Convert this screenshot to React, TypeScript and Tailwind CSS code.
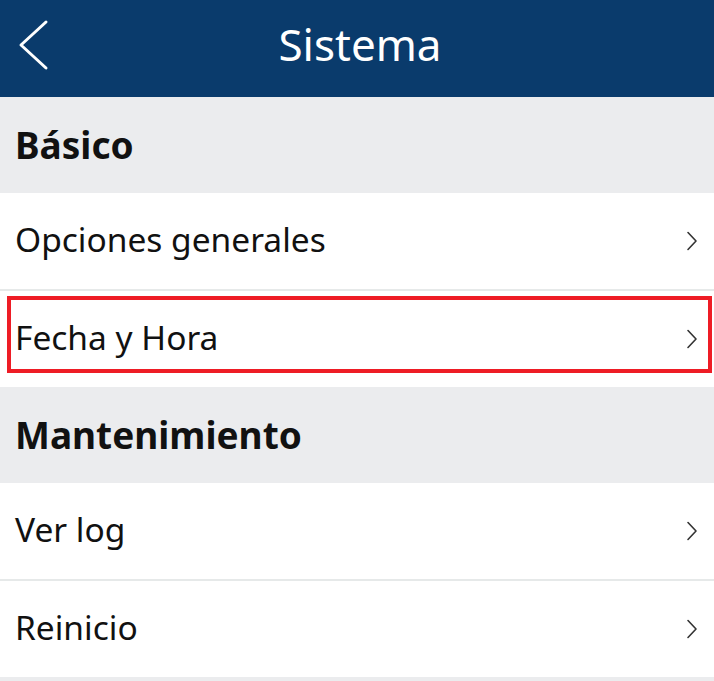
import React from 'react';

type Row = { label: string; highlight?: boolean };
type Section = { title: string; rows: Row[] };

const sections: Section[] = [
  {
    title: 'Básico',
    rows: [{ label: 'Opciones generales' }, { label: 'Fecha y Hora', highlight: true }],
  },
  {
    title: 'Mantenimiento',
    rows: [{ label: 'Ver log' }, { label: 'Reinicio' }],
  },
];

const Chevron = () => (
  <svg width="12" height="20" viewBox="0 0 12 20" fill="none" className="text-[#333]">
    <path d="M2 1.5 L10 10 L2 18.5" stroke="currentColor" strokeWidth="1.6" strokeLinecap="round" strokeLinejoin="round" />
  </svg>
);

export default function App() {
  return (
    <div className="w-[714px] h-[681px] overflow-hidden bg-[#ebecee] font-['Noto_Sans',sans-serif] text-[#111]">
      <header className="relative h-[97px] bg-[#0a3b6c] flex items-center justify-center">
        <button className="absolute left-[13px] top-[15px] p-1">
          <svg width="32" height="52" viewBox="0 0 32 52" fill="none">
            <path d="M29 3 L4 26 L29 49" stroke="white" strokeWidth="3" strokeLinecap="round" strokeLinejoin="round" />
          </svg>
        </button>
        <h1 className="text-white text-[44px] leading-none -mt-[10px] ml-[6px]">Sistema</h1>
      </header>

      {sections.map((section) => (
        <div key={section.title}>
          <div className="h-[96px] flex items-center px-[15px]">
            <span className="text-[37px] font-bold leading-none -mt-[2px]">{section.title}</span>
          </div>
          <div className="bg-white">
            {section.rows.map((row, i) => (
              <div key={row.label}>
                {i > 0 && <div className="h-[2px] bg-[#e6e9e9]" />}
                <div className="relative h-[96px] flex items-center justify-between pl-[15px] pr-[16px]">
                  <span className="text-[33.5px] leading-none -mt-[3px]">{row.label}</span>
                  <Chevron />
                  {row.highlight && (
                    <div className="absolute left-[7px] right-[2px] top-[5px] bottom-[14px] border-[4px] border-[#ee1c25]" />
                  )}
                </div>
              </div>
            ))}
          </div>
        </div>
      ))}
    </div>
  );
}
